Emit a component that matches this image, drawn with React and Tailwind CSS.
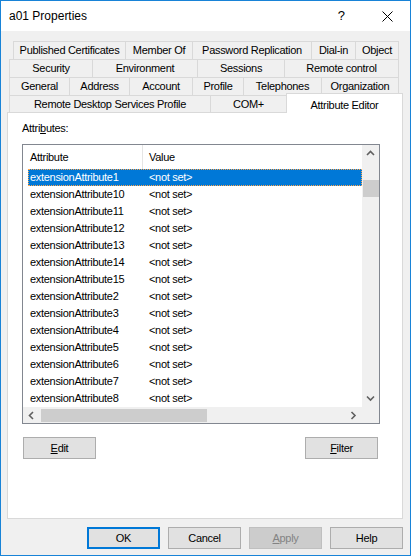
import React from "react";

const tabRows = [
  {
    ml: "ml-[12px]",
    tabs: [
      ["Published Certificates", "w-[112px]"],
      ["Member Of", "w-[67px]"],
      ["Password Replication", "w-[119px]"],
      ["Dial-in", "w-[44px]"],
      ["Object", "w-[44px]"],
    ],
  },
  {
    ml: "ml-[8px]",
    tabs: [
      ["Security", "w-[83px]"],
      ["Environment", "w-[105px]"],
      ["Sessions", "w-[87px]"],
      ["Remote control", "w-[115px]"],
    ],
  },
  {
    ml: "ml-[8px]",
    tabs: [
      ["General", "w-[60px]"],
      ["Address", "w-[60px]"],
      ["Account", "w-[63px]"],
      ["Profile", "w-[51px]"],
      ["Telephones", "w-[78px]"],
      ["Organization", "w-[78px]"],
    ],
  },
];

const rows = [
  "extensionAttribute1",
  "extensionAttribute10",
  "extensionAttribute11",
  "extensionAttribute12",
  "extensionAttribute13",
  "extensionAttribute14",
  "extensionAttribute15",
  "extensionAttribute2",
  "extensionAttribute3",
  "extensionAttribute4",
  "extensionAttribute5",
  "extensionAttribute6",
  "extensionAttribute7",
  "extensionAttribute8",
];

function Chevron({ dir }) {
  // small scrollbar arrow glyph
  const paths = {
    up: "M1 5 L4.5 1.5 L8 5",
    down: "M1 1.5 L4.5 5 L8 1.5",
    left: "M5 1 L1.5 4.5 L5 8",
    right: "M1.5 1 L5 4.5 L1.5 8",
  };
  const vertical = dir === "up" || dir === "down";
  return (
    <svg
      width={vertical ? 9 : 7}
      height={vertical ? 7 : 9}
      viewBox={vertical ? "0 0 9 7" : "0 0 7 9"}
    >
      <path d={paths[dir]} fill="none" stroke="#606060" strokeWidth="1.6" />
    </svg>
  );
}

function Button({ children, className = "", disabled, primary }) {
  return (
    <div
      className={
        "flex h-[22px] w-[73px] items-center justify-center " +
        (disabled
          ? "border border-[#bfbfbf] bg-[#cccccc] text-[#838383] "
          : primary
          ? "border-2 border-[#0078d7] bg-[#e1e1e1] text-black "
          : "border border-[#adadad] bg-[#e1e1e1] text-black ") +
        className
      }
    >
      {children}
    </div>
  );
}

export default function App() {
  return (
    <div
      className="flex h-[556px] w-[411px] flex-col border border-[#1883d7] bg-[#f0f0f0] text-[11px] tracking-[-0.3px] text-black"
      style={{ fontFamily: '"Liberation Sans", Arial, sans-serif' }}
    >
      {/* title bar */}
      <div className="flex h-[30px] shrink-0 items-center bg-white tracking-normal">
        <span className="ml-[8px] text-[12px]">a01 Properties</span>
        <span className="ml-auto mr-[37px] text-[13px]">?</span>
        <svg width="11" height="11" viewBox="0 0 11 11" className="mr-[17px]">
          <path d="M0.5 0.5 L10.5 10.5 M10.5 0.5 L0.5 10.5" stroke="#000" strokeWidth="1" />
        </svg>
      </div>

      {/* tabs */}
      <div className="mt-[10px] flex flex-col">
        {tabRows.map((row, i) => (
          <div key={i} className={"flex h-[18px] " + row.ml}>
            {row.tabs.map(([label, w], j) => (
              <div
                key={label}
                className={
                  "flex items-center justify-center border-t border-l border-[#d9d9d9] " +
                  w +
                  (j === row.tabs.length - 1 ? " border-r" : "")
                }
              >
                {label}
              </div>
            ))}
          </div>
        ))}
        <div className="relative flex h-[17px] ml-[8px]">
          <div className="flex w-[201px] items-center justify-center border-t border-l border-[#d9d9d9]">
            Remote Desktop Services Profile
          </div>
          <div className="flex w-[76px] items-center justify-center border-t border-l border-[#d9d9d9]">
            COM+
          </div>
          <div className="relative z-10 -mt-[2px] flex h-[20px] w-[117px] items-start justify-center border-t border-l border-r border-[#d9d9d9] bg-white pt-[3px]">
            Attribute Editor
          </div>
        </div>
      </div>

      {/* page */}
      <div className="ml-[6px] flex h-[407px] w-[396px] flex-col border border-[#d9d9d9] bg-white">
        <div className="ml-[14px] mt-[7px] h-[16px]">
          Attri<span className="underline">b</span>utes:
        </div>

        <div className="ml-[14px] mt-[8px] flex h-[280px] w-[358px] border border-[#828790] bg-white">
          <div className="flex w-[339px] flex-col">
            <div className="flex h-[24px] shrink-0">
              <div className="flex w-[120px] items-center border-r border-[#e5e5e5] pl-[7px]">
                Attribute
              </div>
              <div className="flex items-center pl-[6px]">Value</div>
            </div>
            <div className="flex flex-col">
              {rows.map((name, i) => (
                <div key={name} className="flex h-[17px] pl-[5px]">
                  <div
                    className={
                      "flex w-full items-center " +
                      (i === 0
                        ? "border border-dotted border-[#ffa64d] bg-[#0078d7] text-white"
                        : "border border-transparent")
                    }
                  >
                    <span className="w-[120px] pl-[1px]">{name}</span>
                    <span>&lt;not set&gt;</span>
                  </div>
                </div>
              ))}
            </div>
            <div className="flex h-[16px] shrink-0 items-center bg-[#f0f0f0]">
              <div className="flex w-[17px] justify-center">
                <Chevron dir="left" />
              </div>
              <div className="ml-[1px] h-[13px] w-[166px] bg-[#cdcdcd]" />
              <div className="ml-auto flex w-[17px] justify-center">
                <Chevron dir="right" />
              </div>
            </div>
          </div>
          <div className="flex w-[17px] flex-col bg-[#f0f0f0]">
            <div className="flex h-[17px] items-center justify-center">
              <Chevron dir="up" />
            </div>
            <div className="mt-[18px] ml-[1px] h-[17px] w-[16px] bg-[#cdcdcd]" />
            <div className="mt-auto flex h-[17px] items-center justify-center">
              <Chevron dir="down" />
            </div>
            <div className="h-[16px] bg-[#f0f0f0]" />
          </div>
        </div>

        <div className="ml-[15px] mt-[13px] flex w-[355px] justify-between">
          <Button>
            <span className="underline">E</span>dit
          </Button>
          <Button>
            <span className="underline">F</span>ilter
          </Button>
        </div>
      </div>

      {/* dialog buttons */}
      <div className="mt-[8px] ml-[86px] flex gap-[8px]">
        <Button primary>OK</Button>
        <Button>Cancel</Button>
        <Button disabled>
          <span className="underline">A</span>pply
        </Button>
        <Button>Help</Button>
      </div>
    </div>
  );
}
